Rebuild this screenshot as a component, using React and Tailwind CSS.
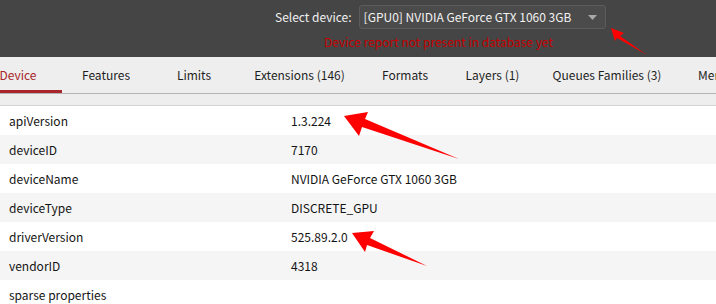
const tabs = [
	{ label: 'Device', w: 'w-[88px] -ml-[26px]', active: true },
	{ label: 'Features', w: 'w-[88px]' },
	{ label: 'Limits', w: 'w-[88px]' },
	{ label: 'Extensions (146)', w: 'w-[123px]' },
	{ label: 'Formats', w: 'w-[88px]' },
	{ label: 'Layers (1)', w: 'w-[87px]' },
	{ label: 'Queues Families (3)', w: 'w-[142px]' },
	{ label: 'Memory (3)', w: 'px-[20px]' },
]

const rows = [
	['apiVersion', '1.3.224'],
	['deviceID', '7170'],
	['deviceName', 'NVIDIA GeForce GTX 1060 3GB'],
	['deviceType', 'DISCRETE_GPU'],
	['driverVersion', '525.89.2.0'],
	['vendorID', '4318'],
	['sparse properties', ''],
]

// red annotation arrows drawn over the screenshot
const Arrows = () => (
	<svg
		className="pointer-events-none absolute left-0 top-0"
		width="716"
		height="304"
		viewBox="0 0 716 304"
	>
		<polygon
			fill="#ff0000"
			points="611,28 624,33 620,36 647,55 617,38 615,41"
		/>
		<polygon
			fill="#ff0000"
			points="344,116 368,112 365,119 459,159 362,127 359,136"
		/>
		<polygon
			fill="#ff0000"
			points="352,233 374,231 370,238 427,266 367,245 365,252"
		/>
	</svg>
)

const App = () => {
	return (
		<div
			className="relative h-[304px] w-[716px] overflow-hidden bg-[#eeeeee] text-[12px] text-[#141414]"
			style={{ fontFamily: '"Noto Sans CJK SC", Lato, sans-serif' }}
		>
			<div className="h-[57px] bg-[#454545]">
				<div className="flex h-[34px] items-center pl-[275px]">
					<span className="mr-[7px] whitespace-nowrap text-[#f0f0f0]">Select device:</span>
					<div className="flex h-[24px] w-[247px] shrink-0 items-center justify-between rounded-[3px] border border-[#5c5c5c] bg-[#4b4b4b] pl-[4px] pr-[8px] text-[#f2f2f2]">
						<span className="whitespace-nowrap">[GPU0] NVIDIA GeForce GTX 1060 3GB</span>
						<svg width="9" height="5" viewBox="0 0 9 5" className="shrink-0">
							<polygon points="0,0 9,0 4.5,5" fill="#a8a8a8" />
						</svg>
					</div>
				</div>
				<div className="pl-[324px] leading-[16px] text-[#c40000]">
					Device report not present in database yet
				</div>
			</div>

			<div className="flex h-[37px] items-stretch overflow-hidden whitespace-nowrap border-b border-[#b4b4b4]">
				{tabs.map((t) => (
					<div
						key={t.label}
						className={`${t.w} flex shrink-0 items-center justify-center ${
							t.active
								? 'border-b-[3px] border-[#a8262b] pt-[2px] text-[#a8262b]'
								: 'text-[#1e1e1e]'
						}`}
					>
						{t.label}
					</div>
				))}
			</div>

			<div className="h-[11px]" />
			<div className="border-t border-[#d4d4d4]">
				{rows.map(([k, v], i) => (
					<div
						key={k}
						className={`flex h-[29px] items-center ${
							i % 2 === 1 ? 'bg-[#f5f5f5]' : 'bg-white'
						}`}
					>
						<div className="w-[291px] pl-[9px]">{k}</div>
						<div>{v}</div>
					</div>
				))}
			</div>

			<Arrows />
		</div>
	)
}

export default App
